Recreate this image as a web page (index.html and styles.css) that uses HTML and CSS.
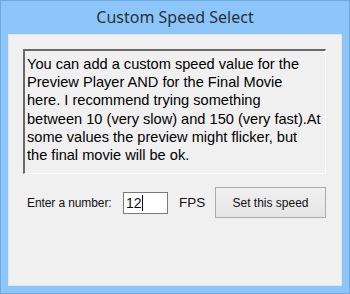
FILE: index.html
```html
<!DOCTYPE html>
<html lang="en">
<head>
  <meta charset="UTF-8" />
  <title>Custom Speed Select</title>
  <link rel="stylesheet" href="styles.css">
</head>
<body>
  <!-- Dialog window -->
  <div class="window">
    <div class="title">Custom Speed Select</div>
    <div class="client">
      <div class="info">You can add a custom speed value for the<br>Preview Player AND for the Final Movie<br>here. I recommend trying something<br>between 10 (very slow) and 150 (very fast).At<br>some values the preview might flicker, but<br>the final movie will be ok.</div>
      <div class="row">
        <span class="label">Enter a number:</span>
        <div class="input">12<span class="caret"></span></div>
        <span class="fps">FPS</span>
        <button class="btn">Set this speed</button>
      </div>
    </div>
  </div>
</body>
</html>
```

FILE: styles.css
```css
body {
  margin: 0;
  font-family: 'Liberation Sans', Arial, sans-serif;
}

/* Window frame */
.window {
  width: 350px;
  height: 294px;
  box-sizing: border-box;
  border: 1px solid #6ea9de;
  background: #8cc6f8;
  padding: 0 7px 7px;
  display: flex;
  flex-direction: column;
}

.title {
  height: 33px;
  line-height: 33px;
  text-align: center;
  font-family: 'Noto Sans', sans-serif;
  font-size: 16px;
  color: #2a2f35;
}

.client {
  flex: 1;
  background: #f0f0f0;
  border: 1px solid #e2e6ea;
  padding: 14px 15px 0 14px;
}

/* Read-only text area */
.info {
  width: 303px;
  height: 125px;
  box-sizing: border-box;
  border-top: 2px solid #696969;
  border-left: 2px solid #696969;
  border-right: 1px solid #fcfcfc;
  border-bottom: 1px solid #fcfcfc;
  padding: 4px 0 0 2px;
  font-size: 14.6px;
  line-height: 18.2px;
  color: #000;
  white-space: nowrap;
}

/* Input row */
.row {
  display: flex;
  align-items: center;
  margin-top: 13px;
  height: 31px;
  font-size: 12px;
  color: #111;
}

.label {
  margin-left: 4px;
  width: 84px;
  flex: none;
  white-space: nowrap;
  letter-spacing: -0.1px;
}

.input {
  margin-left: 12px;
  width: 45px;
  height: 22px;
  flex: none;
  box-sizing: border-box;
  border: 1px solid #7a7a7a;
  background: #fff;
  font-size: 14px;
  line-height: 20px;
  padding-left: 2px;
  display: flex;
  align-items: center;
}

.caret {
  width: 1px;
  height: 16px;
  background: #000;
}

.fps {
  margin-left: 11px;
  width: 22px;
  flex: none;
  font-size: 13.5px;
}

.btn {
  margin-left: 14px;
  width: 111px;
  height: 31px;
  flex: none;
  border: 1px solid #acacac;
  background: linear-gradient(#f0f0f0, #e5e5e5);
  font-family: 'Liberation Sans', Arial, sans-serif;
  font-size: 12px;
  color: #111;
  padding: 0;
}
```
